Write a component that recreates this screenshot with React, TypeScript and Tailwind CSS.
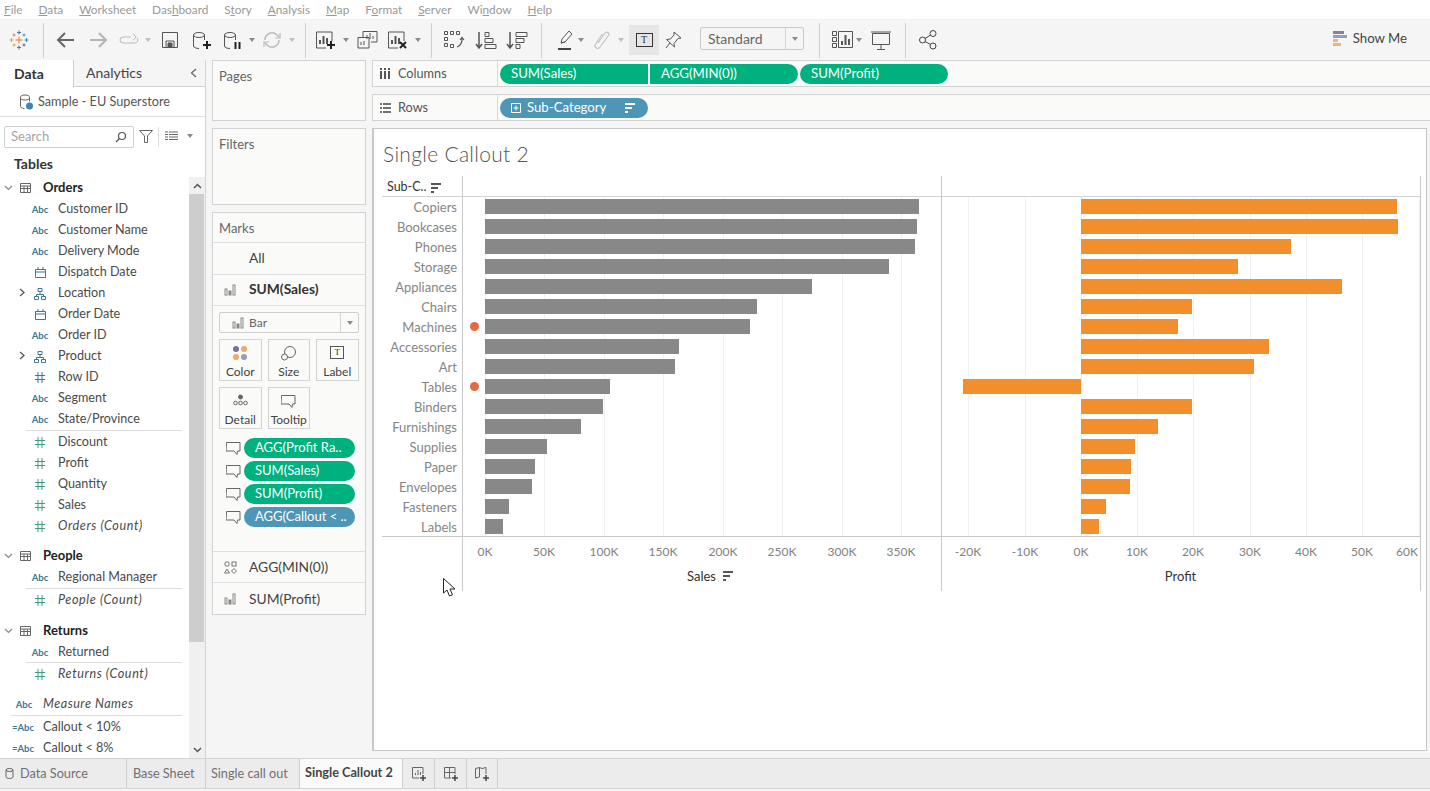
import type { ReactNode } from 'react';

const MENU = [
    ['', 'F', 'ile'],
    ['', 'D', 'ata'],
    ['', 'W', 'orksheet'],
    ['Das', 'h', 'board'],
    ['S', 't', 'ory'],
    ['', 'A', 'nalysis'],
    ['', 'M', 'ap'],
    ['F', 'o', 'rmat'],
    ['', 'S', 'erver'],
    ['Wi', 'n', 'dow'],
    ['', 'H', 'elp'],
];

const ROWS = [
    { name: 'Copiers', sales: 434, profit: 316 },
    { name: 'Bookcases', sales: 432, profit: 317 },
    { name: 'Phones', sales: 430, profit: 210 },
    { name: 'Storage', sales: 404, profit: 157 },
    { name: 'Appliances', sales: 327, profit: 261 },
    { name: 'Chairs', sales: 272, profit: 111 },
    { name: 'Machines', sales: 265, profit: 97, dot: true },
    { name: 'Accessories', sales: 194, profit: 188 },
    { name: 'Art', sales: 190, profit: 173 },
    { name: 'Tables', sales: 125, profit: -118, dot: true },
    { name: 'Binders', sales: 118, profit: 111 },
    { name: 'Furnishings', sales: 96, profit: 77 },
    { name: 'Supplies', sales: 62, profit: 54 },
    { name: 'Paper', sales: 50, profit: 50 },
    { name: 'Envelopes', sales: 47, profit: 49 },
    { name: 'Fasteners', sales: 24, profit: 25 },
    { name: 'Labels', sales: 18, profit: 18 },
];

// [label, gridline x, label x], px from the left edge of each pane
type Tick = readonly [string, number, number];
const SALES_TICKS: Tick[] = [
    ['0K', 22, 22], ['50K', 81, 81], ['100K', 141, 141], ['150K', 200, 200],
    ['200K', 260, 260], ['250K', 319, 319], ['300K', 379, 379], ['350K', 438, 438],
];
const PROFIT_TICKS: Tick[] = [
    ['-20K', 26, 26], ['-10K', 83, 83], ['0K', 139, 139], ['10K', 195, 195], ['20K', 251, 251],
    ['30K', 308, 308], ['40K', 364, 364], ['50K', 420, 420], ['60K', 477, 465],
];
const PROFIT_ZERO = 139;

type IconProps = { className?: string };

function Svg({ children, size = 24, className = '' }: { children: ReactNode; size?: number; className?: string }) {
    return (
        <svg width={size} height={size} viewBox={`0 0 ${size} ${size}`} fill="none" stroke="currentColor" className={`shrink-0 ${className}`}>
            {children}
        </svg>
    );
}

function Caret({ className = '' }: IconProps) {
    return <div className={`w-2 flex justify-center shrink-0 ${className}`}><div className="w-0 h-0 border-x-[3.5px] border-x-transparent border-t-[4px] border-t-[#8a8a8a]" /></div>;
}

function Sep({ className = '' }: IconProps) {
    return <div className={`w-px h-[35px] bg-[#d0d0d0] shrink-0 ${className}`} />;
}

function Logo({ className = '' }: IconProps) {
    const crosses: [number, number, number, string][] = [
        [12, 12, 3.5, '#e8762b'], [12, 4.5, 2, '#5b6f9e'], [12, 19.5, 2, '#5b6f9e'], [4.5, 12, 2, '#e8a03b'], [19.5, 12, 2, '#3f87a4'],
        [7, 7, 1.5, '#d9736f'], [17, 7, 1.5, '#3f97b5'], [7, 17, 1.5, '#f0a030'], [17, 17, 1.5, '#6a5a94'],
    ];
    return (
        <Svg className={className}>
            {crosses.map(([x, y, r, c], i) => (
                <path key={i} d={`M${x - r} ${y}H${x + r}M${x} ${y - r}V${y + r}`} stroke={c} strokeWidth="1" />
            ))}
        </Svg>
    );
}

function Cylinder({ children, className = '' }: { children?: ReactNode; className?: string }) {
    return (
        <Svg className={`text-[#555] ${className}`}>
            <ellipse cx="10" cy="7" rx="5.5" ry="2.5" />
            <path d="M4.5 7v11c0 1.4 2.5 2.5 5.5 2.5M15.5 7v5" />
            {children}
        </Svg>
    );
}

function BarsBox({ children, className = '' }: { children?: ReactNode; className?: string }) {
    return (
        <Svg className={`text-[#555] ${className}`}>
            <path d="M19 13V4H3.500v16H13" />
            <path d="M7 16v-4M10.500 16V8M14 16v-6" strokeWidth="2" />
            {children}
        </Svg>
    );
}

function Plus() {
    return <path d="M18 13v8M14 17h8" stroke="#222" strokeWidth="2" />;
}

function MiniBars({ className = '' }: IconProps) {
    return (
        <svg width="12" height="12" viewBox="0 0 12 12" fill="none" stroke="#888" className={`shrink-0 ${className}`}>
            <rect x="1" y="5" width="2" height="6" />
            <rect x="5" y="7" width="2" height="4" fill="#888" />
            <rect x="9" y="1" width="2" height="10" />
        </svg>
    );
}

function Bubble({ className = '' }: IconProps) {
    return (
        <svg width="15" height="15" viewBox="0 0 15 15" fill="none" stroke="#666" className={`shrink-0 ${className}`}>
            <path d="M.5 1.500h13.500v8.500h-2.500l-.5 3.500-3-3.500h-8z" />
        </svg>
    );
}

function SortBars({ dark = false }: { dark?: boolean }) {
    const bar = dark ? 'bg-[#555]' : 'bg-white';
    return (
        <div className="flex flex-col gap-[2px] w-[10px] shrink-0">
            <div className={`h-[2px] w-[10px] ${bar}`} />
            <div className={`h-[2px] w-[7px] ${bar}`} />
            <div className={`h-[2px] w-[3px] ${bar}`} />
        </div>
    );
}

function Toolbar() {
    return (
        <div className="h-[41px] bg-[#f5f5f5] flex items-center pl-[7px] border-t border-[#f0f0f0] text-[#555] shrink-0">
            <Logo />
            <Sep className="ml-3" />
            <Svg className="ml-[10px]"><path d="M20 12H5M11 5l-7 7 7 7" stroke="#666" strokeWidth="2" /></Svg>
            <Svg className="ml-2"><path d="M4 12h15M13 5l7 7-7 7" stroke="#b4b4b4" strokeWidth="2" /></Svg>
            <Svg className="ml-[6px]"><path d="M15 9H7a3 3 0 0 0 0 6h12a3 3 0 0 0 2-5M17 5.500l3 3.500-3 3.500" stroke="#bbb" /></Svg>
            <Caret className="ml-1 opacity-50" />
            <Svg className="ml-[6px]">
                <path d="M4.500 4.500h15v15h-15z" />
                <path d="M8 19v-6h8v6" />
                <path d="M10 15h4v4h-4z" fill="currentColor" />
            </Svg>
            <Cylinder className="ml-[7px]"><Plus /></Cylinder>
            <Cylinder className="ml-[7px]"><path d="M15.500 14v7M19.500 14v7" stroke="#222" strokeWidth="2" /></Cylinder>
            <Caret className="ml-1" />
            <Svg className="ml-1 text-[#bbb]">
                <path d="M5 12a7 7 0 0 1 12-5l2 2M19 12a7 7 0 0 1-12 5l-2-2" strokeWidth="1.500" />
                <path d="M20 5v5h-5M4 19v-5h5" strokeWidth="1.200" />
            </Svg>
            <Caret className="ml-1 opacity-50" />
            <Sep className="ml-[9px]" />
            <BarsBox className="ml-[7px]"><Plus /></BarsBox>
            <Caret className="ml-[5px]" />
            <Svg className="ml-[5px]">
                <path d="M8 9V3.500h14V14h-6" />
                <path d="M12 11V7M15 11V5M18 11V8" />
                <path d="M3 9.500h11V20H3z" />
                <path d="M6 17v-3M9 17v-4" />
            </Svg>
            <BarsBox className="ml-[6px]"><path d="M15 14l6 6M21 14l-6 6" stroke="#222" strokeWidth="2" /></BarsBox>
            <Caret className="ml-[5px]" />
            <Sep className="ml-[9px]" />
            <Svg className="ml-[9px]">
                <path d="M3.500 3.500h3v3h-3zM9.500 3.500h3v3h-3zM15.500 3.500h3v3h-3zM3.500 9.500h3v3h-3zM3.500 15.500h3v3h-3zM9.500 19.500h3v-3h-3z" />
                <path d="M21 10c.5 4-1.500 8-5 9M19 12l2-2.500 2 2.500" strokeWidth="1.200" />
            </Svg>
            <Svg className="ml-[9px]">
                <path d="M5 4v15M2 16l3 4 3-4" strokeWidth="1.500" />
                <path d="M11 4.500h4v4h-4zM11 10.500h8v4h-8zM11 16.500h11v4H11z" />
            </Svg>
            <Svg className="ml-[7px]">
                <path d="M5 4v15M2 16l3 4 3-4" strokeWidth="1.500" />
                <path d="M11 4.500h11v4H11zM11 10.500h8v4h-8zM11 16.500h4v4h-4z" />
            </Svg>
            <Sep className="ml-3" />
            <Svg className="ml-[10px]">
                <path d="M9 15l1-4 7-8 3 3-7 8z" />
                <path d="M9 15l4-1" />
                <path d="M6 21h13" stroke="#444" strokeWidth="2" />
            </Svg>
            <Caret className="ml-px" />
            <Svg className="ml-[5px] text-[#c4c4c4]">
                <path d="M8 15l7-10c1.500-2 5 0 3.500 2.500L10 19c-2 3-6.500.5-4.500-3l7-10" strokeWidth="1.200" />
            </Svg>
            <Caret className="ml-[3px] opacity-50" />
            <div className="ml-1 w-[30px] h-[30px] bg-[#e6e6e6] flex items-center justify-center shrink-0">
                <div className="w-[17px] h-[14px] border border-[#333] flex items-center justify-center text-[10px] leading-none text-[#333] font-['Liberation_Serif',serif]">T</div>
            </div>
            <Svg className="ml-[2px]">
                <path d="M13 4l7 6-3 .5-4 5 .5 3.500-8-7.500 4-.5 3.500-4zM9 15l-4 5" />
            </Svg>
            <div className="ml-[15px] w-[104px] h-[23px] mb-[3px] border border-[#c9c9c9] rounded-[2px] flex items-center shrink-0">
                <span className="flex-1 pl-[7px] text-[14px] text-[#666]">Standard</span>
                <div className="w-[18px] h-full border-l border-[#d4d4d4] flex items-center justify-center">
                    <Caret />
                </div>
            </div>
            <Sep className="ml-[15px]" />
            <Svg className="ml-[10px]">
                <path d="M2.500 3.500h4v4h-4zM2.500 9.500h4v4h-4zM2.500 15.500h4v4h-4z" />
                <path d="M8.500 3.500h14v16h-14z" />
                <path d="M12 17v-4M15.500 17V7M19 17v-6" strokeWidth="2" />
            </Svg>
            <Caret className="ml-px" />
            <Svg className="ml-[6px]">
                <path d="M3.500 5.500h17v11h-17zM2 4h20M12 17v5M8 21.500h8" />
            </Svg>
            <Sep className="ml-3" />
            <Svg className="ml-[10px] text-[#444]">
                <circle cx="17" cy="5.500" r="3" />
                <circle cx="6.500" cy="12" r="3" />
                <circle cx="17" cy="18" r="3" />
                <path d="M9 10.500l5.500-3.500M9 13.500l5.500 3" />
            </Svg>
            <div className="ml-auto mr-[23px] mb-[2px] flex items-center gap-[6px]">
                <div className="flex flex-col gap-px w-[14px]">
                    <div className="h-[3px] w-[11px] bg-[#8a7f9c]" />
                    <div className="h-[3px] w-[14px] bg-[#8ea0c0]" />
                    <div className="h-[3px] w-[5px] bg-[#f2b27a]" />
                    <div className="h-[3px] w-[8px] bg-[#f2b27a]" />
                </div>
                <span className="text-[13.200px] text-[#444]">Show Me</span>
            </div>
        </div>
    );
}

function Abc({ calc = false }: { calc?: boolean }) {
    return <span className="text-[9.500px] font-bold text-[#3b7896] leading-none">{calc ? '=Abc' : 'Abc'}</span>;
}

function Hash({ color }: { color: string }) {
    return (
        <svg width="10" height="11" viewBox="0 0 10 11" fill="none" stroke={color} className="shrink-0">
            <path d="M3 0v11M7 0v11M0 3.500h10M0 7.500h10" />
        </svg>
    );
}

function Calendar() {
    return (
        <svg width="11" height="11" viewBox="0 0 11 11" fill="none" stroke="#3b7896" className="shrink-0">
            <path d="M.5 2.500h10v8H.5zM.5 5h10M3 0v3M8 0v3" />
        </svg>
    );
}

function Hierarchy() {
    return (
        <svg width="12" height="12" viewBox="0 0 12 12" fill="none" stroke="#3b7896" className="shrink-0">
            <path d="M4 .5h4v3H4zM.5 8.500h4v3h-4zM7.500 8.500h4v3h-4zM6 3.500v3M2.500 8.500v-2h7v2" />
        </svg>
    );
}

type Field = { label: string; icon: ReactNode; italic?: boolean; expand?: boolean };

const GREEN = '#3d9c7c';
const BLUE = '#3b7896';

const ORDERS_DIMS: Field[] = [
    { label: 'Customer ID', icon: <Abc /> },
    { label: 'Customer Name', icon: <Abc /> },
    { label: 'Delivery Mode', icon: <Abc /> },
    { label: 'Dispatch Date', icon: <Calendar /> },
    { label: 'Location', icon: <Hierarchy />, expand: true },
    { label: 'Order Date', icon: <Calendar /> },
    { label: 'Order ID', icon: <Abc /> },
    { label: 'Product', icon: <Hierarchy />, expand: true },
    { label: 'Row ID', icon: <Hash color={BLUE} /> },
    { label: 'Segment', icon: <Abc /> },
    { label: 'State/Province', icon: <Abc /> },
];

const ORDERS_MEASURES: Field[] = [
    { label: 'Discount', icon: <Hash color={GREEN} /> },
    { label: 'Profit', icon: <Hash color={GREEN} /> },
    { label: 'Quantity', icon: <Hash color={GREEN} /> },
    { label: 'Sales', icon: <Hash color={GREEN} /> },
    { label: 'Orders (Count)', icon: <Hash color={GREEN} />, italic: true },
];

function FieldRow({ field }: { field: Field }) {
    return (
        <div className="h-[21px] pt-[2px] flex items-center relative text-[12.600px] text-[#4a4a4a]">
            {field.expand && (
                <svg width="7" height="9" viewBox="0 0 7 9" fill="none" stroke="#555" strokeWidth="1.300" className="absolute left-[19px] top-[6px]">
                    <path d="M1 1l4 3.500L1 8" />
                </svg>
            )}
            <div className="w-[58px] pl-[32px] pr-[10px] flex justify-center shrink-0">{field.icon}</div>
            <span className={field.italic ? 'italic tracking-[.6px]' : ''}>{field.label}</span>
        </div>
    );
}

function TableHead({ name, className = '' }: { name: string; className?: string }) {
    return (
        <div className={`h-[21px] flex items-center ${className}`}>
            <svg width="9" height="6" viewBox="0 0 9 6" fill="none" stroke="#888" strokeWidth="1.200" className="ml-[4px]">
                <path d="M1 1l3.500 3.500L8 1" />
            </svg>
            <svg width="11" height="11" viewBox="0 0 11 11" fill="none" stroke="#666" className="ml-[7px]">
                <path d="M.5 1.500h10v9H.5zM.5 4h10M.5 6.500h10M4 4v6.500M7.500 4v6.500" />
            </svg>
            <span className="ml-[12px] text-[13px] font-bold text-[#222]">{name}</span>
        </div>
    );
}

function DataPanel() {
    return (
        <div className="w-[206px] bg-white border-r border-[#d4d4d4] flex flex-col shrink-0 overflow-hidden">
            <div className="h-[27px] flex shrink-0">
                <div className="w-[73px] flex items-center pl-[14px] pb-px text-[14px] font-bold text-[#333]">Data</div>
                <div className="flex-1 bg-[#f5f5f5] border-l border-b border-[#cfcfcf] flex items-center pl-[12px] pr-[8px] pb-px justify-between text-[14px] text-[#444]">
                    Analytics
                    <svg width="7" height="10" viewBox="0 0 7 10" fill="none" stroke="#666" strokeWidth="1.200"><path d="M6 1L1.500 5 6 9" /></svg>
                </div>
            </div>
            <div className="h-[30px] border-b border-[#dcdcdc] flex items-center pl-[19px] shrink-0">
                <svg width="14" height="16" viewBox="0 0 14 16" fill="none" stroke="#666">
                    <ellipse cx="6" cy="3.500" rx="4.500" ry="2.500" />
                    <path d="M1.500 3.500v9c0 1 2 2 4 2M10.500 3.500v4" />
                    <circle cx="10.500" cy="12" r="3.500" fill="#3b87b0" stroke="none" />
                </svg>
                <span className="ml-[5px] text-[12.700px] text-[#555]">Sample - EU Superstore</span>
            </div>
            <div className="h-[32px] flex items-end pb-px pl-[4px] shrink-0">
                <div className="w-[130px] h-[22px] border border-[#cfcfcf] rounded-[2px] flex items-center justify-between pl-[6px] pr-[6px]">
                    <span className="text-[13px] text-[#a5a5a5]">Search</span>
                    <svg width="12" height="12" viewBox="0 0 12 12" fill="none" stroke="#555" strokeWidth="1.200"><circle cx="7" cy="5" r="3.500" /><path d="M4.500 7.500L1 11" /></svg>
                </div>
                <svg width="14" height="13" viewBox="0 0 14 13" fill="none" stroke="#666" className="ml-[5px] mb-[5px]"><path d="M.5.500h13L8.500 6v6.500h-3V6z" /></svg>
                <div className="ml-[5px] w-px h-[20px] bg-[#dcdcdc] mb-px" />
                <svg width="13" height="9" viewBox="0 0 13 9" fill="none" stroke="#666" className="ml-[6px] mb-[8px]"><path d="M0 1h3M4 1h9M0 3.500h3M4 3.500h9M0 6h3M4 6h9M0 8.500h3M4 8.500h9" /></svg>
                <Caret className="ml-[8px] mb-[10px]" />
            </div>
            <div className="h-[28px] flex items-center pl-[14px] text-[14px] font-bold text-[#333] shrink-0">Tables</div>
            <div className="flex-1 relative min-h-0 overflow-hidden">
                <div className="w-[182px]">
                    <TableHead name="Orders" />
                    {ORDERS_DIMS.map((f) => <FieldRow key={f.label} field={f} />)}
                    <div className="ml-[26px] mt-px border-t border-[#dcdcdc]" />
                    {ORDERS_MEASURES.map((f) => <FieldRow key={f.label} field={f} />)}
                    <TableHead name="People" className="mt-[9px]" />
                    <FieldRow field={{ label: 'Regional Manager', icon: <Abc /> }} />
                    <div className="ml-[26px] mt-px border-t border-[#dcdcdc]" />
                    <FieldRow field={{ label: 'People (Count)', icon: <Hash color={GREEN} />, italic: true }} />
                    <TableHead name="Returns" className="mt-[10px]" />
                    <FieldRow field={{ label: 'Returned', icon: <Abc /> }} />
                    <div className="ml-[26px] border-t border-[#dcdcdc]" />
                    <FieldRow field={{ label: 'Returns (Count)', icon: <Hash color={GREEN} />, italic: true }} />
                    <div className="h-[21px] mt-[10px] flex items-center text-[12.600px] text-[#4a4a4a]">
                        <div className="w-[43px] pl-[15px] pr-[10px] flex justify-center"><Abc /></div>
                        <span className="italic tracking-[.5px]">Measure Names</span>
                    </div>
                    <div className="ml-[11px] border-t border-[#dcdcdc]" />
                    <div className="h-[21px] pt-[2px] flex items-center text-[12.600px] text-[#4a4a4a]">
                        <div className="w-[43px] pl-[13px] pr-[10px] flex justify-center"><Abc calc /></div>
                        Callout &lt; 10%
                    </div>
                    <div className="h-[21px] pt-[2px] flex items-center text-[12.600px] text-[#4a4a4a]">
                        <div className="w-[43px] pl-[13px] pr-[10px] flex justify-center"><Abc calc /></div>
                        Callout &lt; 8%
                    </div>
                </div>
                <div className="absolute right-0 top-0 bottom-0 w-[16px] bg-[#f0f0f0] flex flex-col">
                    <div className="h-[17px] flex items-center justify-center">
                        <svg width="9" height="6" viewBox="0 0 9 6" fill="none" stroke="#555" strokeWidth="1.500"><path d="M1 5l3.500-3.500L8 5" /></svg>
                    </div>
                    <div className="h-[448px] w-[15px] bg-[#cdcdcd]" />
                    <div className="mt-auto h-[17px] flex items-center justify-center">
                        <svg width="9" height="6" viewBox="0 0 9 6" fill="none" stroke="#555" strokeWidth="1.500"><path d="M1 1l3.500 3.500L8 1" /></svg>
                    </div>
                </div>
            </div>
        </div>
    );
}

function Card({ label, children }: { label: string; children: ReactNode }) {
    return (
        <div className="w-[42.500px] h-[42px] border border-[#d4d4d4] flex flex-col items-center justify-between pt-[6px]">
            {children}
            <span className="text-[12px] leading-[16px] text-[#444]">{label}</span>
        </div>
    );
}

function MarkPill({ label, blue = false }: { label: string; blue?: boolean }) {
    return (
        <div className="h-[20px] flex items-center pl-[13px] mb-[3px]">
            <Bubble />
            <div className={`ml-[3px] w-[111px] h-[20px] rounded-full pl-[11px] flex items-center text-[13px] text-white ${blue ? 'bg-[#4e96b5]' : 'bg-[#00b180]'}`}>{label}</div>
        </div>
    );
}

function ShelfBox({ title, className = '' }: { title: string; className?: string }) {
    return (
        <div className={`bg-[#fafaf8] border border-[#d2d2d2] pl-[6px] pt-[6px] text-[13px] text-[#666] ${className}`}>{title}</div>
    );
}

function MarksPanel() {
    return (
        <div className="w-[160px] pl-[6px] flex flex-col shrink-0">
            <ShelfBox title="Pages" className="h-[61px]" />
            <ShelfBox title="Filters" className="h-[77px] mt-[7px]" />
            <div className="mt-[7px] h-[403px] bg-[#fafaf8] border border-[#d2d2d2] flex flex-col text-[13.800px] text-[#444]">
                <div className="h-[30px] pt-[2px] flex items-center pl-[6px] text-[13px] text-[#666] border-b border-[#dedede]">Marks</div>
                <div className="h-[32px] flex items-center pl-[36px] border-b border-[#dedede]">All</div>
                <div className="h-[31px] pb-px flex items-center pl-[11px] gap-[7px] font-bold text-[#333] border-b border-[#dedede]">
                    <MiniBars className="mr-[6px]" />SUM(Sales)
                </div>
                <div className="mx-[6px] mt-[6px] h-[21px] border border-[#cfcfcf] rounded-[2px] flex items-center shrink-0">
                    <MiniBars className="ml-[12px]" />
                    <span className="flex-1 ml-[5px] text-[12px] text-[#666]">Bar</span>
                    <div className="w-[18px] h-full border-l border-[#d4d4d4] flex items-center justify-center"><Caret /></div>
                </div>
                <div className="ml-[6px] mt-[6px] flex gap-[6px]">
                    <Card label="Color">
                        <div className="grid grid-cols-2 gap-[2px]">
                            <div className="w-[6px] h-[6px] rounded-full bg-[#7b6f94]" />
                            <div className="w-[6px] h-[6px] rounded-full bg-[#f0a868]" />
                            <div className="w-[6px] h-[6px] rounded-full bg-[#f0a868]" />
                            <div className="w-[6px] h-[6px] rounded-full bg-[#8aa0c4]" />
                        </div>
                    </Card>
                    <Card label="Size">
                        <svg width="15" height="15" viewBox="0 0 15 15" fill="none" stroke="#666">
                            <circle cx="9" cy="6" r="5.500" /><circle cx="3.500" cy="11" r="3" fill="#fafaf8" />
                        </svg>
                    </Card>
                    <Card label="Label">
                        <div className="w-[14px] h-[13px] border border-[#555] flex items-center justify-center text-[9px] leading-none text-[#333] font-['Liberation_Serif',serif]">T</div>
                    </Card>
                </div>
                <div className="ml-[6px] mt-[6px] flex gap-[6px] mb-[9px]">
                    <Card label="Detail">
                        <svg width="15" height="12" viewBox="0 0 15 12" fill="none" stroke="#666">
                            <circle cx="7.500" cy="3" r="2" fill="#666" /><circle cx="2.500" cy="9" r="1.800" /><circle cx="7.500" cy="9" r="1.800" /><circle cx="12.500" cy="9" r="1.800" />
                        </svg>
                    </Card>
                    <Card label="Tooltip"><Bubble /></Card>
                </div>
                <MarkPill label="AGG(Profit Ra.." />
                <MarkPill label="SUM(Sales)" />
                <MarkPill label="SUM(Profit)" />
                <MarkPill label="AGG(Callout < .." blue />
                <div className="mt-auto h-[32px] flex items-center pl-[11px] border-y border-[#dedede]">
                    <svg width="13" height="13" viewBox="0 0 13 13" fill="none" stroke="#777" className="mr-[12px]">
                        <rect x="1" y="1" width="4" height="4" rx="1" /><rect x="8" y="1" width="4" height="4" /><path d="M3 8l2.500 4h-5zM10 7.500l2.500 2.500-2.500 2.500L7.500 10z" />
                    </svg>
                    AGG(MIN(0))
                </div>
                <div className="h-[31px] pt-px flex items-center pl-[11px]">
                    <MiniBars className="mr-[13px]" />SUM(Profit)
                </div>
            </div>
        </div>
    );
}

function Shelf({ title, icon, children, className = '' }: { title: string; icon: ReactNode; children: ReactNode; className?: string }) {
    return (
        <div className={`h-[27px] bg-[#fafaf8] border-y border-l border-[#d2d2d2] flex items-stretch shrink-0 ${className}`}>
            <div className="w-[125px] border-r border-[#d8d8d8] flex items-center pl-[7px] gap-[7px] text-[12.700px] text-[#555] shrink-0">
                {icon}{title}
            </div>
            <div className="flex items-center pl-[2px] gap-[2px] text-[13.200px] text-white">{children}</div>
        </div>
    );
}

function ColumnsIcon() {
    const bar = (
        <div className="flex flex-col gap-px w-[2px]">
            <div className="h-[2px] bg-[#555]" />
            <div className="h-[8px] bg-[#555]" />
        </div>
    );
    return <div className="flex gap-[2px] w-[11px]">{bar}{bar}{bar}</div>;
}

function Pane({ ticks, children, title }: { ticks: Tick[]; children: ReactNode; title: ReactNode }) {
    return (
        <div className="w-[479px] border-r border-[#c8c8c8] flex flex-col shrink-0">
            <div className="h-[21px] border-b border-[#d4d4d4]" />
            <div className="relative h-[340px] border-b border-[#c8c8c8]">
                {ticks.map(([t, x]) => (
                    <div key={t} className="absolute top-0 bottom-0 w-px bg-[#f0f0f0]" style={{ left: x }} />
                ))}
                <div className="relative">{children}</div>
            </div>
            <div className="relative h-[54px]">
                {ticks.map(([t, , x]) => (
                    <span key={t} className="absolute top-[6px] -translate-x-1/2 text-[12px] text-[#808080]" style={{ left: x }}>{t}</span>
                ))}
                <div className="absolute left-0 right-0 top-[30px] flex justify-center text-[13px] leading-[18px] text-[#333] pr-[1px]">{title}</div>
            </div>
        </div>
    );
}

function Chart() {
    return (
        <div className="flex pl-[8px] mt-[11px]">
            <div className="w-[81px] border-r border-[#c8c8c8] flex flex-col shrink-0">
                <div className="h-[21px] border-b border-[#d4d4d4] flex items-center pl-[5px] pt-[3px] gap-[4px] text-[12.500px] text-[#333]">
                    Sub-C.. <SortBars dark />
                </div>
                <div className="h-[340px] border-b border-[#c8c8c8]">
                    {ROWS.map((r) => (
                        <div key={r.name} className="h-[20px] pt-[2px] flex items-center justify-end pr-[5px] text-[13px] text-[#858585]">{r.name}</div>
                    ))}
                </div>
                <div className="h-[54px]" />
            </div>
            <Pane
                ticks={SALES_TICKS}
                title={
                    <span className="relative">
                        Sales
                        <span className="absolute left-[36px] top-[4px]"><SortBars dark /></span>
                    </span>
                }
            >
                {ROWS.map((r) => (
                    <div key={r.name} className="h-[20px] pt-[2px] pl-[22px] relative">
                        {r.dot && <div className="absolute left-[7px] top-[5px] w-[9px] h-[9px] rounded-full bg-[#e06b45]" />}
                        <div className="h-[15px] bg-[#888888]" style={{ width: r.sales }} />
                    </div>
                ))}
            </Pane>
            <Pane ticks={PROFIT_TICKS} title="Profit">
                {ROWS.map((r) => (
                    <div key={r.name} className="h-[20px] pt-[2px]">
                        <div
                            className="h-[15px] bg-[#f28e2b]"
                            style={{ marginLeft: r.profit < 0 ? PROFIT_ZERO + r.profit : PROFIT_ZERO, width: Math.abs(r.profit) }}
                        />
                    </div>
                ))}
            </Pane>
        </div>
    );
}

function BottomTabs() {
    const tab = 'h-full flex items-center border-r border-[#cfcfcf] shrink-0';
    return (
        <div className="h-[31px] bg-[#ececec] border-y border-[#d4d4d4] flex text-[12.700px] text-[#707070] shrink-0">
            <div className={`${tab} w-[127px] pl-[5px] gap-[6px]`}>
                <svg width="9" height="11" viewBox="0 0 9 11" fill="none" stroke="#666">
                    <ellipse cx="4.500" cy="2" rx="3.500" ry="1.500" /><path d="M1 2v7c0 .8 1.500 1.500 3.500 1.500S8 9.800 8 9V2" />
                </svg>
                Data Source
            </div>
            <div className={`${tab} w-[79px] pl-[6px]`}>Base Sheet</div>
            <div className={`${tab} w-[94px] pl-[5px]`}>Single call out</div>
            <div className={`${tab} w-[103px] pl-[5px] bg-[#fafafa] font-bold text-[#444] pb-[2px]`}>Single Callout 2</div>
            <div className={`${tab} w-[32px] justify-center`}>
                <svg width="16" height="16" viewBox="0 0 16 16" fill="none" stroke="#666">
                    <path d="M12 8V1.500H1.500V12H8" /><path d="M4.500 9V7M7 9V4M9.500 9V6" /><path d="M12 9v6M9 12h6" stroke="#444" strokeWidth="1.500" />
                </svg>
            </div>
            <div className={`${tab} w-[32px] justify-center`}>
                <svg width="16" height="16" viewBox="0 0 16 16" fill="none" stroke="#666">
                    <path d="M12 8V1.500H1.500V12H8M1.500 6.500H12M6.500 1.500V12" /><path d="M12 9v6M9 12h6" stroke="#444" strokeWidth="1.500" />
                </svg>
            </div>
            <div className={`${tab} w-[31px] justify-center`}>
                <svg width="16" height="16" viewBox="0 0 16 16" fill="none" stroke="#666">
                    <path d="M1.500 2.500L5.500 1.500 8 2.500 12 1.500V8M1.500 2.500V12L5.500 11M5.500 1.500V11" /><path d="M12 9v6M9 12h6" stroke="#444" strokeWidth="1.500" />
                </svg>
            </div>
        </div>
    );
}

export default function App() {
    return (
        <div className="w-[1430px] h-[791px] relative overflow-hidden flex flex-col bg-[#f5f5f5] font-['Lato','Noto_Sans',sans-serif]">
            <div className="h-[19px] bg-white flex items-center pl-[4px] gap-[16px] text-[11.800px] text-[#999] shrink-0">
                {MENU.map(([a, u, b]) => (
                    <span key={a + u + b}>{a}<span className="underline">{u}</span>{b}</span>
                ))}
            </div>
            <Toolbar />
            <div className="flex-1 min-h-0 flex">
                <DataPanel />
                <MarksPanel />
                <div className="flex-1 pl-[6px] flex flex-col min-w-0">
                    <Shelf title="Columns" icon={<ColumnsIcon />}>
                        <div className="w-[148px] h-[20px] pt-px bg-[#00b180] rounded-l-full pl-[11px] flex items-center">SUM(Sales)</div>
                        <div className="w-[148px] h-[20px] pt-px bg-[#00b180] rounded-r-full pl-[11px] flex items-center">AGG(MIN(0))</div>
                        <div className="w-[148px] h-[20px] pt-px bg-[#00b180] rounded-full pl-[11px] flex items-center">SUM(Profit)</div>
                    </Shelf>
                    <Shelf
                        title="Rows"
                        className="mt-[7px]"
                        icon={<svg width="11" height="10" viewBox="0 0 11 10" fill="none" stroke="#444" strokeWidth="1.300"><path d="M0 1h2M3 1h8M0 5h2M3 5h8M0 9h2M3 9h8" /></svg>}
                    >
                        <div className="w-[148px] h-[20px] pt-px bg-[#4e96b5] rounded-full pl-[11px] pr-[13px] flex items-center">
                            <svg width="10" height="10" viewBox="0 0 10 10" fill="none" stroke="#fff" className="mr-[6px]"><path d="M.5.500h9v9h-9zM5 2.500v5M2.500 5h5" /></svg>
                            <span className="flex-1">Sub-Category</span>
                            <SortBars />
                        </div>
                    </Shelf>
                    <div className="mt-[7px] w-[1055px] h-[623px] shrink-0 bg-white border-l-2 border-y border-r border-[#c8c8c8]">
                        <div className="pl-[9px] pt-[11px] h-[36px] text-[21px] leading-[28px] font-light text-[#555] tracking-[.3px]">Single Callout 2</div>
                        <Chart />
                    </div>
                </div>
            </div>
            <BottomTabs />
            <div className="h-[2px] bg-[#f5f5f5] shrink-0" />
            <svg width="14" height="20" viewBox="0 0 14 20" className="absolute left-[443px] top-[578px]">
                <path d="M.5.500v14.500l3.500-3 2.500 6 3-1.200-2.500-5.800H12z" fill="#fff" stroke="#222" />
            </svg>
        </div>
    );
}
